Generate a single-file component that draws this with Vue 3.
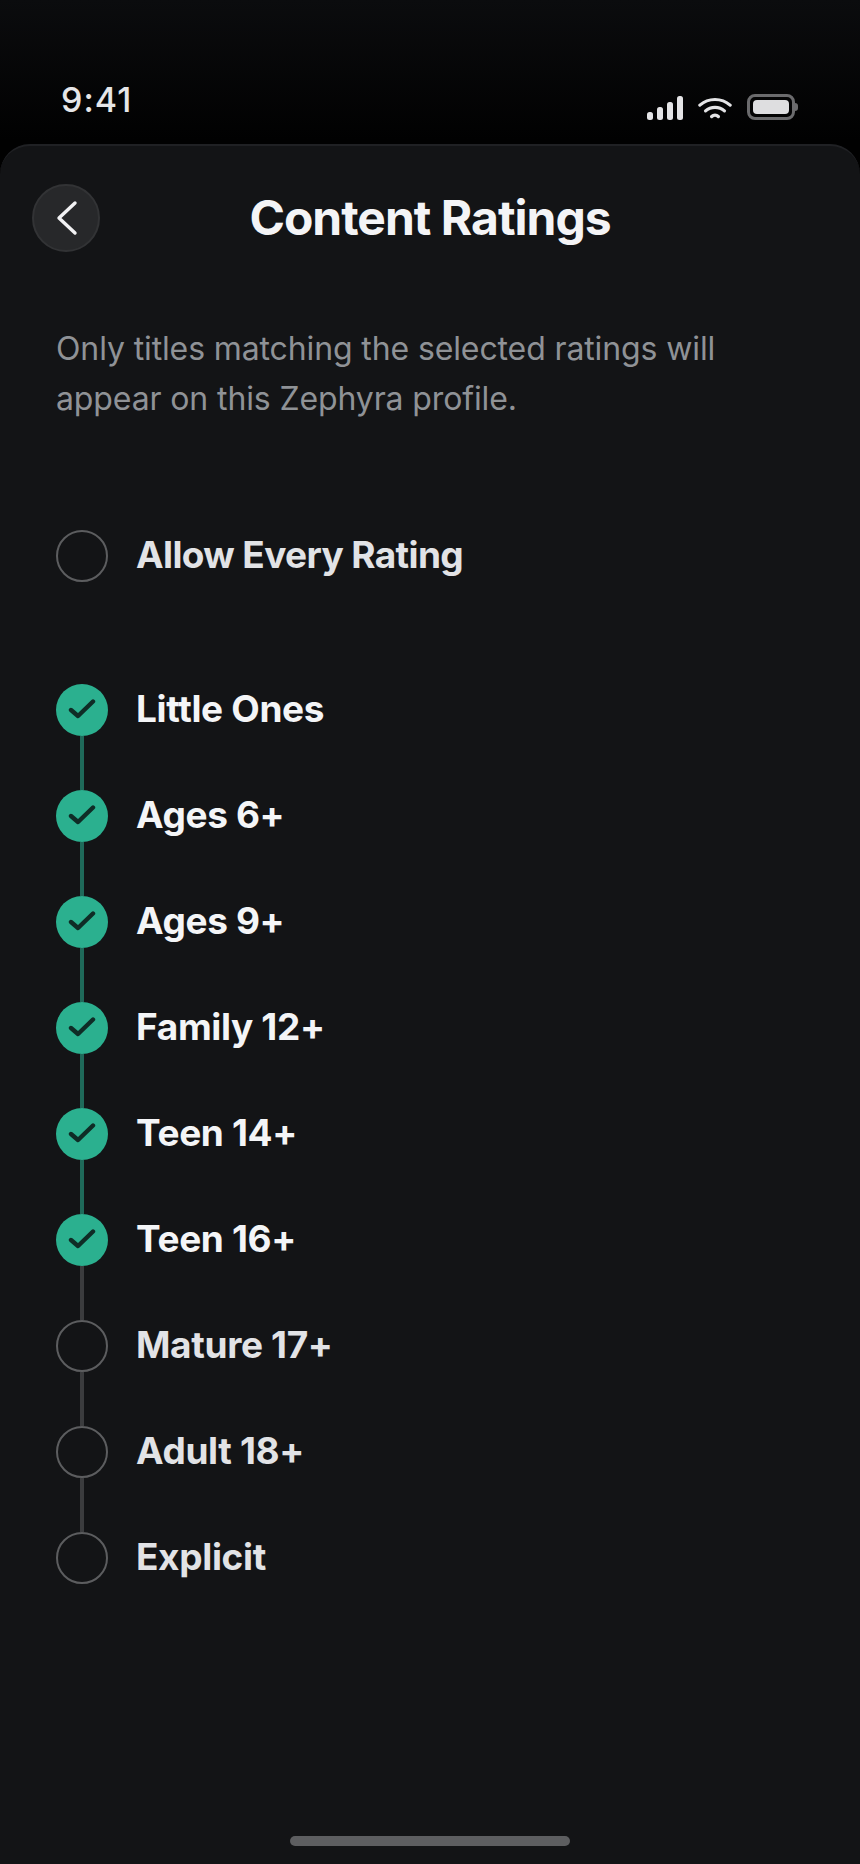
<script setup>
const ratings = [
  { label: 'Little Ones', on: true },
  { label: 'Ages 6+', on: true },
  { label: 'Ages 9+', on: true },
  { label: 'Family 12+', on: true },
  { label: 'Teen 14+', on: true },
  { label: 'Teen 16+', on: true },
  { label: 'Mature 17+', on: false },
  { label: 'Adult 18+', on: false },
  { label: 'Explicit', on: false }
]
</script>

<template>
  <div class="screen">
    <header class="status">
      <span class="time">9:41</span>
      <div class="status-icons">
        <svg class="signal" width="36" height="24" viewBox="0 0 36 24" fill="#e4e4e6">
          <rect x="0" y="16" width="6" height="8" rx="2.5" />
          <rect x="10" y="11" width="6" height="13" rx="2.5" />
          <rect x="20" y="6" width="6" height="18" rx="2.5" />
          <rect x="30" y="0" width="6" height="24" rx="2.5" />
        </svg>
        <svg class="wifi" width="34" height="22" viewBox="0 0 36 23" fill="none" stroke="#e4e4e6" stroke-linecap="round">
          <path d="M2 8.500C11 0.500 25 0.500 34 8.500" stroke-width="3.400" />
          <path d="M8 14.500C13.500 9.500 22.500 9.500 28 14.500" stroke-width="3.400" />
          <path d="M14.500 20.500C16.500 18.700 19.500 18.700 21.500 20.500" stroke-width="3.600" />
        </svg>
        <div class="battery">
          <div class="battery-body"><div class="battery-fill"></div></div>
          <div class="battery-cap"></div>
        </div>
      </div>
    </header>

    <main class="sheet">
      <div class="nav">
        <button class="back" type="button" aria-label="Back">
          <svg width="26" height="38" viewBox="0 0 26 38" fill="none" stroke="#f2f2f4" stroke-width="3.400" stroke-linecap="round" stroke-linejoin="round">
            <path d="M22 4L6 19L22 34" />
          </svg>
        </button>
        <h1 class="title">Content Ratings</h1>
      </div>

      <p class="intro">Only titles matching the selected ratings will appear on this Zephyra profile.</p>

      <div class="allow">
        <span class="dot"></span>
        <span class="label off">Allow Every Rating</span>
      </div>

      <ul class="list">
        <li v-for="(r, i) in ratings" :key="r.label" class="row">
          <div class="marker">
            <span class="dot" :class="{ on: r.on }">
              <svg v-if="r.on" width="28" height="22" viewBox="0 0 28 22" fill="none" stroke="#0f2c26" stroke-width="4.400" stroke-linecap="round" stroke-linejoin="round">
                <path d="M3 11L10 17L25 2.500" />
              </svg>
            </span>
            <span v-if="i < ratings.length - 1" class="link" :class="{ on: r.on && ratings[i + 1].on }"></span>
          </div>
          <span class="label" :class="{ off: !r.on }">{{ r.label }}</span>
        </li>
      </ul>

      <div class="home"></div>
    </main>
  </div>
</template>

<style>
html, body { margin: 0; background: #000; }
</style>

<style scoped>
.screen {
  width: 860px;
  height: 1864px;
  display: flex;
  flex-direction: column;
  background: linear-gradient(180deg, #0b0c0e 0%, #010101 140px);
  font-family: Inter, "Liberation Sans", sans-serif;
  overflow: hidden;
}
.status {
  height: 144px;
  flex: none;
  box-sizing: border-box;
  padding: 0 62px 0 61px;
  display: flex;
  justify-content: space-between;
}
.time {
  margin-top: 79px;
  font-size: 34px;
  line-height: 42px;
  font-weight: 500;
  letter-spacing: 1px;
  color: #e6e6e8;
}
.status-icons {
  margin-top: 94px;
  height: 26px;
  display: flex;
  align-items: flex-start;
  gap: 15px;
}
.signal { margin-top: 2px; }
.wifi { margin-top: 3px; }
.battery {
  display: flex;
  align-items: center;
}
.battery-body {
  width: 48px;
  height: 26px;
  box-sizing: border-box;
  border: 3px solid #6b6b6d;
  border-radius: 8px;
  padding: 3px;
}
.battery-fill {
  width: 100%;
  height: 100%;
  background: #dedee0;
  border-radius: 4px;
}
.battery-cap {
  width: 3px;
  height: 8px;
  background: #6b6b6d;
  border-radius: 0 3px 3px 0;
}
.sheet {
  flex: 1;
  box-sizing: border-box;
  background: #131416;
  border-top: 2px solid #202124;
  border-radius: 30px 30px 0 0;
  display: flex;
  flex-direction: column;
  padding: 0 0 18px;
}
.nav {
  position: relative;
  margin-top: 38px;
  height: 68px;
  display: flex;
  align-items: center;
  justify-content: center;
}
.back {
  position: absolute;
  left: 32px;
  top: 0;
  width: 68px;
  height: 68px;
  padding: 0;
  box-sizing: border-box;
  border: 2px solid #323335;
  border-radius: 50%;
  background: #27282a;
  display: flex;
  align-items: center;
  justify-content: center;
}
.title {
  margin: 0;
  font-size: 48px;
  line-height: 68px;
  font-weight: 700;
  letter-spacing: -1px;
  color: #f4f4f6;
}
.intro {
  margin: 72px 0 0;
  padding: 0 56px;
  width: 780px;
  box-sizing: border-box;
  font-size: 32px;
  line-height: 50px;
  font-weight: 400;
  letter-spacing: -0.12px;
  color: #8f9296;
}
.allow {
  margin-top: 106px;
  padding-left: 56px;
  display: flex;
  align-items: flex-start;
  gap: 28px;
}
.allow .label {
  line-height: 50px;
  letter-spacing: -0.63px;
}
.list {
  list-style: none;
  margin: 102px 0 0;
  padding: 0 0 0 56px;
}
.row {
  display: flex;
  gap: 28px;
}
.marker {
  width: 52px;
  display: flex;
  flex-direction: column;
  align-items: center;
}
.dot {
  width: 52px;
  height: 52px;
  flex: none;
  box-sizing: border-box;
  border: 2px solid #5c5d5f;
  border-radius: 50%;
  display: flex;
  align-items: center;
  justify-content: center;
}
.dot.on {
  border: none;
  background: #2bb08f;
}
.link {
  width: 4px;
  height: 54px;
  background: #3b3c3e;
}
.link.on { background: #1f6a5a; }
.label {
  font-size: 37px;
  line-height: 49px;
  font-weight: 700;
  letter-spacing: -0.35px;
  color: #f4f5f7;
}
.label.off { color: #e2e3e6; }
.home {
  margin: auto auto 0;
  width: 280px;
  height: 10px;
  border-radius: 5px;
  background: #5d5e60;
}
</style>
